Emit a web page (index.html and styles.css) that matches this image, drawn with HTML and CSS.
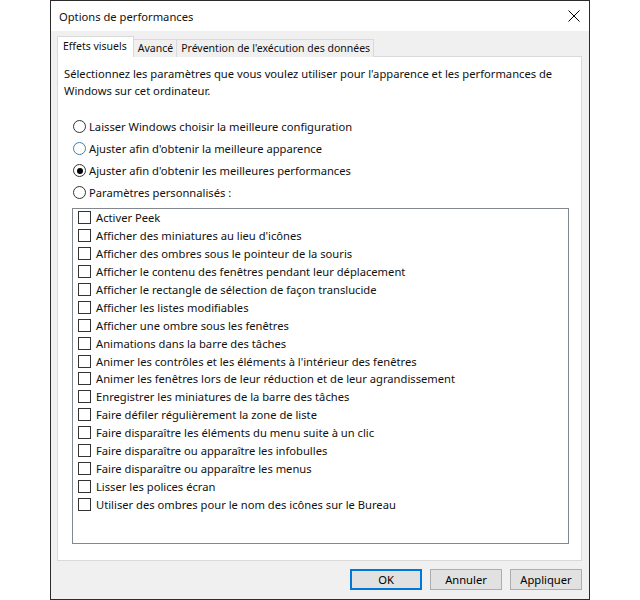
FILE: index.html
```html
<!DOCTYPE html>
<html lang="fr">
<head>
<meta charset="utf-8">
<title>Options de performances</title>
<link rel="stylesheet" href="styles.css">
</head>
<body>
<div class="window">
  <div class="titlebar">
    <span class="title">Options de performances</span>
    <svg class="close" width="12" height="12" viewBox="0 0 12 12"><path d="M0.5 0.5 L11.5 11.5 M11.5 0.5 L0.5 11.5" stroke="#000" stroke-width="1" fill="none"/></svg>
  </div>
  <div class="body">
    <div class="tabs">
      <div class="tab active">Effets visuels</div>
      <div class="tab">Avancé</div>
      <div class="tab">Prévention de l'exécution des données</div>
    </div>
    <div class="panel">
      <p class="desc">Sélectionnez les paramètres que vous voulez utiliser pour l'apparence et les performances de Windows sur cet ordinateur.</p>
      <div class="radios">
        <div class="radio"><span class="circle"></span>Laisser Windows choisir la meilleure configuration</div>
        <div class="radio"><span class="circle hover"></span>Ajuster afin d'obtenir la meilleure apparence</div>
        <div class="radio"><span class="circle checked"></span>Ajuster afin d'obtenir les meilleures performances</div>
        <div class="radio"><span class="circle"></span>Paramètres personnalisés :</div>
      </div>
      <div class="list">
        <div class="item"><span class="box"></span>Activer Peek</div>
        <div class="item"><span class="box"></span>Afficher des miniatures au lieu d'icônes</div>
        <div class="item"><span class="box"></span>Afficher des ombres sous le pointeur de la souris</div>
        <div class="item"><span class="box"></span>Afficher le contenu des fenêtres pendant leur déplacement</div>
        <div class="item"><span class="box"></span>Afficher le rectangle de sélection de façon translucide</div>
        <div class="item"><span class="box"></span>Afficher les listes modifiables</div>
        <div class="item"><span class="box"></span>Afficher une ombre sous les fenêtres</div>
        <div class="item"><span class="box"></span>Animations dans la barre des tâches</div>
        <div class="item"><span class="box"></span>Animer les contrôles et les éléments à l'intérieur des fenêtres</div>
        <div class="item"><span class="box"></span>Animer les fenêtres lors de leur réduction et de leur agrandissement</div>
        <div class="item"><span class="box"></span>Enregistrer les miniatures de la barre des tâches</div>
        <div class="item"><span class="box"></span>Faire défiler régulièrement la zone de liste</div>
        <div class="item"><span class="box"></span>Faire disparaître les éléments du menu suite à un clic</div>
        <div class="item"><span class="box"></span>Faire disparaître ou apparaître les infobulles</div>
        <div class="item"><span class="box"></span>Faire disparaître ou apparaître les menus</div>
        <div class="item"><span class="box"></span>Lisser les polices écran</div>
        <div class="item"><span class="box"></span>Utiliser des ombres pour le nom des icônes sur le Bureau</div>
      </div>
    </div>
    <div class="buttons">
      <button class="btn default">OK</button>
      <button class="btn">Annuler</button>
      <button class="btn">Appliquer</button>
    </div>
  </div>
</div>
</body>
</html>
```

FILE: styles.css
```css
html, body {
  margin: 0;
  padding: 0;
  background: #ffffff;
}
body {
  font-family: "Noto Sans", "Open Sans", "Liberation Sans", sans-serif;
  font-size: 11.2px;
  color: #111;
}
.window {
  margin-left: 50px;
  width: 540px;
  height: 600px;
  box-sizing: border-box;
  border: 1px solid #2b2b2b;
  display: flex;
  flex-direction: column;
  background: #f0f0f0;
}
.titlebar {
  height: 30px;
  background: #ffffff;
  display: flex;
  align-items: center;
  justify-content: space-between;
  padding: 0 8px 0 8px;
  flex: none;
}
.title {
  font-size: 11.2px;
}
.close {
  margin-right: 1px;
  margin-top: -1px;
}
.body {
  flex: 1;
  display: flex;
  flex-direction: column;
  padding: 6px 7px 0 6px;
}
.tabs {
  display: flex;
  align-items: flex-end;
  height: 20px;
  position: relative;
  z-index: 1;
  margin-bottom: -1px;
}
.tab {
  height: 18px;
  line-height: 16px;
  padding: 0 3px 0 4px;
  border: 1px solid #d9d9d9;
  border-bottom: none;
  background: #f0f0f0;
  margin-left: -1px;
  box-sizing: border-box;
  font-size: 10.5px;
}
.tab.active {
  background: #ffffff;
  height: 21px;
  line-height: 19px;
  margin-left: 0;
  padding: 0 6px 0 5px;
}
.panel {
  height: 505px;
  box-sizing: border-box;
  background: #ffffff;
  border: 1px solid #d9d9d9;
  padding: 8px 0 0 0;
  display: flex;
  flex-direction: column;
  flex: none;
}
.desc {
  margin: 0 0 0 6px;
  line-height: 17px;
  width: 505px;
}
.radios {
  margin: 19px 0 0 15px;
  display: flex;
  flex-direction: column;
  gap: 5px;
}
.radio {
  display: flex;
  align-items: center;
  height: 17px;
}
.circle {
  width: 11px;
  height: 11px;
  border: 1px solid #333;
  border-radius: 50%;
  margin-right: 3px;
  position: relative;
  flex: none;
}
.circle.hover {
  border-color: #3c7fb1;
}
.circle.checked::after {
  content: "";
  position: absolute;
  left: 2.5px;
  top: 2.5px;
  width: 6px;
  height: 6px;
  border-radius: 50%;
  background: #000;
}
.list {
  margin: 7px 0 0 14px;
  width: 497px;
  height: 336px;
  box-sizing: border-box;
  border: 1px solid #828790;
  padding: 0 0 0 5px;
}
.item {
  display: flex;
  align-items: center;
  height: 17.9px;
}
.box {
  width: 11px;
  height: 11px;
  border: 1px solid #333;
  margin-right: 5px;
  background: #fff;
  flex: none;
}
.buttons {
  display: flex;
  justify-content: flex-end;
  gap: 8px;
  margin-top: 8px;
}
.btn {
  width: 72px;
  height: 21px;
  box-sizing: border-box;
  font-family: inherit;
  font-size: 11.2px;
  background: #e1e1e1;
  border: 1px solid #adadad;
  padding: 0;
  color: #000;
}
.btn.default {
  border: 2px solid #0078d7;
}
```
